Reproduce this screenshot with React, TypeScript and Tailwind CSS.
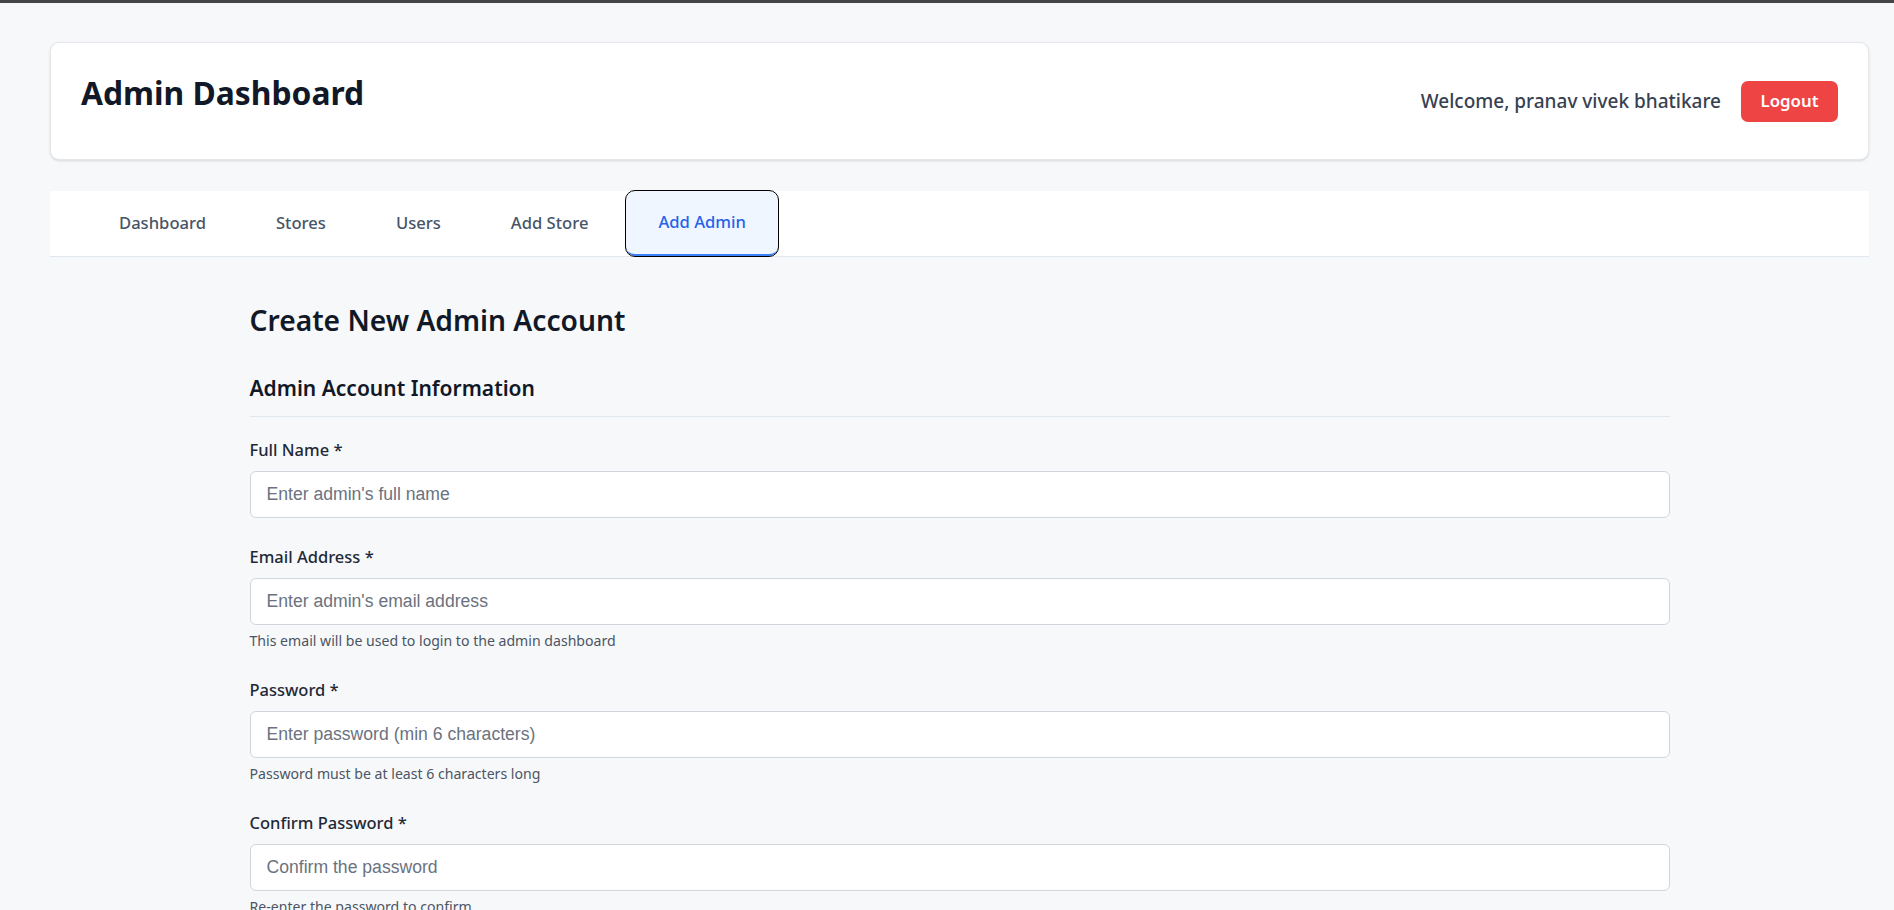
import { useState } from 'react'

const tabs = ['Dashboard', 'Stores', 'Users', 'Add Store', 'Add Admin']

type FieldProps = {
  label: string
  placeholder: string
  type?: string
  help?: string
}

function Field({ label, placeholder, type = 'text', help }: FieldProps) {
  return (
    <div className="mb-[26.5px]">
      <label className="block text-[16.5px] leading-[24px] font-medium text-[#1f2937] mb-[9.4px]">
        {label}
      </label>
      <input
        type={type}
        placeholder={placeholder}
        className="block w-full h-[47px] px-[16px] bg-white border border-[#d1d5db] rounded-[6px] font-['Liberation_Sans',Arial,sans-serif] text-[17.6px] text-[#111827] placeholder:text-[#6b7280] outline-none"
      />
      {help && (
        <p className="mt-[6px] text-[14.1px] leading-[20px] text-[#4b5563]">{help}</p>
      )}
    </div>
  )
}

export default function App() {
  const [active, setActive] = useState('Add Admin')

  return (
    <div className="min-h-screen bg-[#f7f8fa] font-['Noto_Sans',sans-serif]">
      <div className="h-[3px] bg-[#454545]" />

      <div className="pl-[50px] pr-[25px] pt-[39px] pb-10">
        {/* Header card */}
        <header className="h-[118px] flex items-center justify-between px-[30px] bg-white border border-[#e5e7eb] rounded-[9px] shadow-sm">
          <h1 className="self-start mt-[30px] text-[31.8px] leading-[40px] font-bold text-[#111827]">
            Admin Dashboard
          </h1>
          <div className="flex items-center gap-5">
            <span className="text-[19px] leading-[28px] font-medium text-[#374151]">
              Welcome, pranav vivek bhatikare
            </span>
            <button className="w-[97px] h-[41px] flex items-center justify-center rounded-[7px] bg-[#ef4444] text-white text-[16.8px] font-semibold">
              Logout
            </button>
          </div>
        </header>

        {/* Tabs */}
        <nav className="mt-[31px] h-[66px] flex items-stretch gap-[6px] pl-[37px] bg-white border-b border-[#e2e8f0]">
          {tabs.map((tab) =>
            tab === active ? (
              <button
                key={tab}
                onClick={() => setActive(tab)}
                className="px-8 h-[65px] text-[16.6px] font-medium text-[#2563eb] bg-[#eff6ff] border-b-2 border-[#3b82f6] rounded-[9px] outline outline-1 outline-black"
              >
                {tab}
              </button>
            ) : (
              <button
                key={tab}
                onClick={() => setActive(tab)}
                className="px-8 h-[65px] text-[16.6px] font-medium text-[#475569]"
              >
                {tab}
              </button>
            )
          )}
        </nav>

        {/* Form */}
        <main className="max-w-[1420px] mx-auto pt-[45px]">
          <h2 className="text-[28.2px] leading-[36px] font-semibold text-[#111827]">
            Create New Admin Account
          </h2>

          <h3 className="mt-[36px] pb-[14px] border-b border-[#e2e8f0] text-[21px] leading-[28px] font-semibold text-[#111827]">
            Admin Account Information
          </h3>

          <form className="mt-[21px]" onSubmit={(e) => e.preventDefault()}>
            <Field label="Full Name *" placeholder="Enter admin's full name" />
            <Field
              label="Email Address *"
              placeholder="Enter admin's email address"
              type="email"
              help="This email will be used to login to the admin dashboard"
            />
            <Field
              label="Password *"
              placeholder="Enter password (min 6 characters)"
              type="password"
              help="Password must be at least 6 characters long"
            />
            <Field
              label="Confirm Password *"
              placeholder="Confirm the password"
              type="password"
              help="Re-enter the password to confirm"
            />
          </form>
        </main>
      </div>
    </div>
  )
}
